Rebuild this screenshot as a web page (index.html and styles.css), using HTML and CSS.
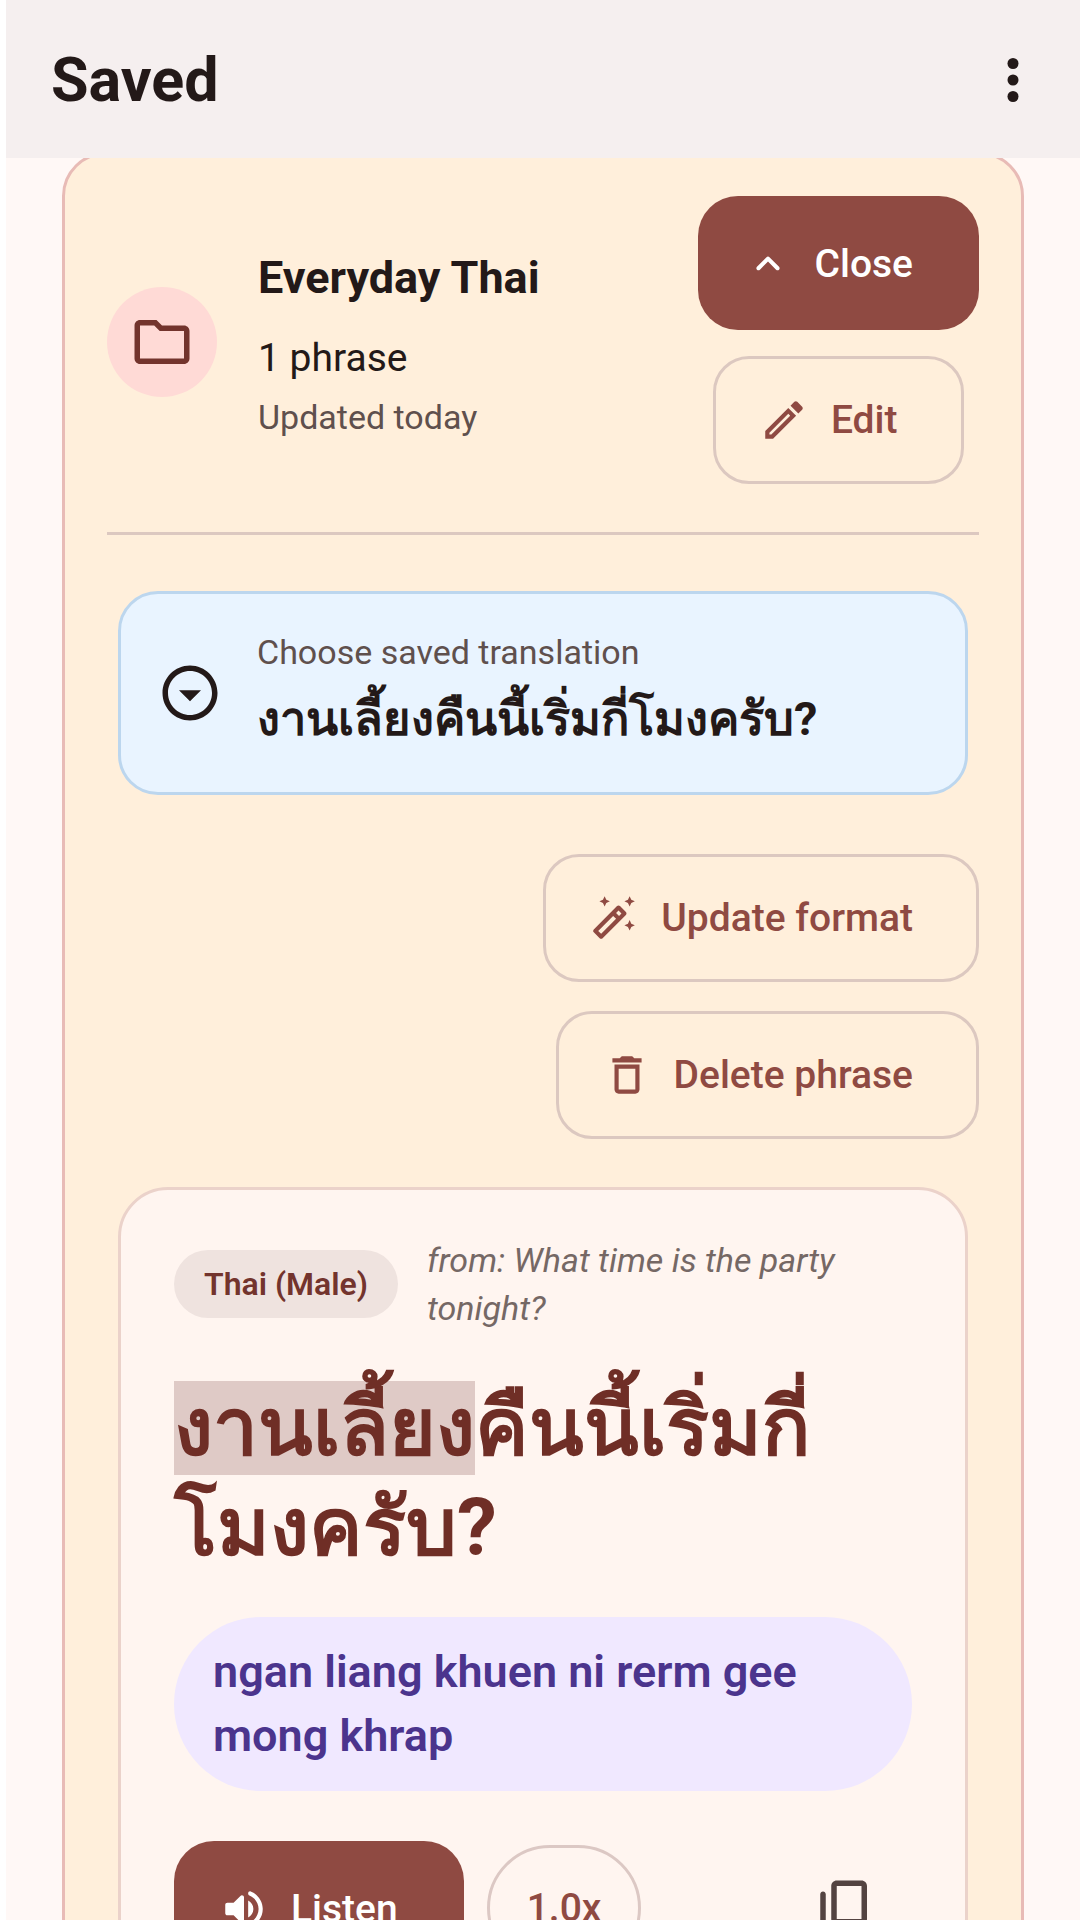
FILE: index.html
```html
<!DOCTYPE html>
<html lang="en">
<head>
    <meta charset="UTF-8">
    <meta name="viewport" content="width=device-width, initial-scale=1.0">

    <title>Saved</title>

    <link rel="stylesheet" href="styles.css">

</head>

<body>

    <header class="app-bar">
        <h1>Saved</h1>
        <button class="icon-button menu-button" aria-label="More options">
            <svg class="icon" viewBox="0 0 24 24"><circle cx="12" cy="6" r="2"/><circle cx="12" cy="12" r="2"/><circle cx="12" cy="18" r="2"/></svg>
        </button>
    </header>

    <main>
        <section class="folder-card">

            <div class="folder-head">
                <div class="folder-avatar">
                    <svg class="icon" viewBox="0 0 24 24"><path d="M9.17 6l2 2H20v10H4V6h5.17M10 4H4c-1.1 0-1.99.9-1.99 2L2 18c0 1.1.9 2 2 2h16c1.1 0 2-.9 2-2V8c0-1.1-.9-2-2-2h-8l-2-2z"/></svg>
                </div>
                <div class="folder-info">
                    <h2>Everyday Thai</h2>
                    <p class="count">1 phrase</p>
                    <p class="caption">Updated today</p>
                </div>
                <div class="folder-actions">
                    <button class="button filled">
                        <svg class="small-icon" viewBox="0 0 24 24"><path d="M8.12 14.71L12 10.83l3.88 3.88c.39.39 1.02.39 1.41 0 .39-.39.39-1.02 0-1.41L12.7 8.71c-.39-.39-1.02-.39-1.41 0L6.7 13.3c-.39.39-.39 1.02 0 1.41.39.38 1.03.39 1.42 0z"/></svg>
                        Close
                    </button>
                    <button class="button outlined">
                        <svg class="small-icon" viewBox="0 0 24 24"><path d="M14.06 9.02l.92.92L5.92 19H5v-.92l9.06-9.06M17.66 3c-.25 0-.51.1-.7.29l-1.83 1.83 3.75 3.75 1.83-1.83c.39-.39.39-1.02 0-1.41l-2.34-2.34c-.2-.2-.45-.29-.71-.29zm-3.6 3.19L3 17.25V21h3.75L17.81 9.94l-3.75-3.75z"/></svg>
                        Edit
                    </button>
                </div>
            </div>

            <hr>

            <div class="picker">
                <svg class="icon" viewBox="0 0 24 24"><path d="M12 4c4.41 0 8 3.59 8 8s-3.59 8-8 8-8-3.59-8-8 3.59-8 8-8m0-2C6.48 2 2 6.48 2 12s4.48 10 10 10 10-4.48 10-10S17.52 2 12 2zm0 13l-4-4h8z"/></svg>
                <div class="picker-field">
                    <label class="caption" for="translation">Choose saved translation</label>
                    <select id="translation" lang="th">
                        <option>งานเลี้ยงคืนนี้เริ่มกี่โมงครับ?</option>
                    </select>
                </div>
            </div>

            <div class="phrase-actions">
                <button class="button outlined">
                    <svg class="small-icon" viewBox="0 0 24 24"><path d="M19.500 6.500l.8-1.700L22 4l-1.700-.8L19.500 1.500l-.8 1.700L17 4l1.700.8zM7.500 6.500l.8-1.700L10 4l-1.700-.8L7.500 1.500l-.8 1.700L5 4l1.700.8zM19.500 13l-.8 1.700-1.700.8 1.700.8.8 1.700.8-1.700 1.700-.8-1.700-.8zm-1.790-3.880l-2.830-2.830c-.2-.19-.45-.29-.71-.29-.26 0-.51.1-.71.29L2.290 17.460c-.39.39-.39 1.020 0 1.410l2.830 2.830c.2.2.45.3.71.3s.51-.1.71-.29l11.170-11.170c.39-.39.39-1.030 0-1.420zm-3.540-.7l1.410 1.410L14.410 11 13 9.590l1.170-1.170zM5.830 19.590l-1.410-1.410L11.590 11 13 12.410l-7.170 7.180z"/></svg>
                    Update format
                </button>
                <button class="button outlined">
                    <svg class="small-icon" viewBox="0 0 24 24"><path d="M6 19c0 1.1.9 2 2 2h8c1.1 0 2-.9 2-2V7H6v12zM8 9h8v10H8V9zm7.5-5l-1-1h-5l-1 1H5v2h14V4z"/></svg>
                    Delete phrase
                </button>
            </div>

            <article class="phrase-card">
                <div class="phrase-source">
                    <span class="chip">Thai (Male)</span>
                    <p class="source-text">from: What time is the party tonight?</p>
                </div>

                <!-- the word being played is marked -->
                <p class="thai" lang="th"><mark>งานเลี้ยง</mark>คืนนี้เริ่มกี่<br>โมงครับ?</p>

                <p class="romanized">ngan liang khuen ni rerm gee mong khrap</p>

                <div class="playback">
                    <button class="button filled">
                        <svg class="small-icon" viewBox="0 0 24 24"><path d="M3 10v4c0 .55.45 1 1 1h3l3.29 3.29c.63.63 1.71.18 1.71-.71V6.41c0-.89-1.08-1.34-1.71-.71L7 9H4c-.55 0-1 .45-1 1zm13.5 2c0-1.77-1.02-3.29-2.5-4.03v8.05c1.48-.73 2.5-2.25 2.5-4.02zM14 4.45v.2c0 .38.25.71.6.85C17.18 6.53 19 9.06 19 12s-1.82 5.47-4.4 6.5c-.36.14-.6.47-.6.85v.2c0 .63.63 1.07 1.21.85C18.6 19.11 21 15.84 21 12s-2.4-7.11-5.79-8.4c-.58-.23-1.21.22-1.21.85z"/></svg>
                        Listen
                    </button>
                    <button class="speed">1.0x</button>
                    <button class="icon-button copy-button" aria-label="Copy">
                        <svg class="icon" viewBox="0 0 24 24"><path d="M15 20H5V7c0-.55-.45-1-1-1s-1 .45-1 1v13c0 1.1.9 2 2 2h10c.55 0 1-.45 1-1s-.45-1-1-1zm5-4V4c0-1.1-.9-2-2-2H9c-1.1 0-2 .9-2 2v12c0 1.1.9 2 2 2h9c1.1 0 2-.9 2-2zm-2 0H9V4h9v12z"/></svg>
                    </button>
                </div>
            </article>

        </section>
    </main>

</body>

</html>
```

FILE: styles.css
```css
* {
    box-sizing: border-box;
}

body {
    margin: 0;
    height: 100vh;
    display: flex;
    flex-direction: column;
    overflow: hidden;
    border-left: 6px solid #ffffff;
    background-color: #fff8f6;
    color: #231918;
    font-family: Roboto, "Noto Sans", sans-serif;
}

h1, h2, p {
    margin: 0;
}

button {
    border: none;
    padding: 0;
    background: none;
    font-family: inherit;
    cursor: pointer;
}

.icon {
    width: 66px;
    height: 66px;
    fill: currentColor;
    flex-shrink: 0;
}

.small-icon {
    width: 50px;
    height: 50px;
    fill: currentColor;
    flex-shrink: 0;
}

.icon-button {
    display: flex;
    align-items: center;
    justify-content: center;
    width: 134px;
    height: 134px;
}

.app-bar {
    display: flex;
    align-items: center;
    justify-content: space-between;
    flex-shrink: 0;
    height: 158px;
    padding: 2px 0 0 45px;
    background-color: #f5efef;
}

h1 {
    font-size: 61px;
    line-height: 76px;
    font-weight: 700;
}

.menu-button {
    color: #231918;
}

main {
    flex: 1;
    min-height: 0;
    overflow-y: auto;
    scrollbar-width: none;
    padding: 0 56px;
}

.folder-card {
    margin-top: -6px;
    padding: 41px 42px;
    border: 3px solid #e8bbb6;
    border-radius: 44px;
    background-color: #ffefdb;
}

.folder-head {
    display: flex;
    align-items: center;
    padding-bottom: 48px;
}

.folder-avatar,
.folder-info {
    margin-top: 4px;
}

.folder-avatar {
    display: flex;
    align-items: center;
    justify-content: center;
    width: 110px;
    height: 110px;
    border-radius: 50%;
    background-color: #ffdad6;
    color: #73342d;
}

.folder-info {
    flex: 1;
    margin-left: 41px;
}

h2 {
    font-size: 45px;
    line-height: 66px;
    font-weight: 700;
    margin-bottom: 20px;
}

.count {
    font-size: 39px;
    line-height: 55px;
    margin-bottom: 8px;
}

.caption {
    font-size: 34px;
    line-height: 46px;
    color: #5f504d;
}

.folder-actions {
    display: flex;
    flex-direction: column;
    align-items: center;
    gap: 26px;
}

.button {
    display: flex;
    align-items: center;
    gap: 22px;
    font-size: 39px;
    line-height: 55px;
    font-weight: 500;
}

.filled {
    height: 134px;
    padding: 2px 66px 0 45px;
    border-radius: 40px;
    background-color: #8f4a42;
    color: #ffffff;
}

.outlined {
    height: 128px;
    padding: 0 63px 0 43px;
    border: 3px solid #dcc8c0;
    border-radius: 36px;
    color: #8f4a42;
}

hr {
    margin: 0 0 56px;
    border: none;
    border-top: 3px solid #dcc8c0;
}

.picker {
    display: flex;
    align-items: center;
    gap: 34px;
    height: 204px;
    margin: 0 11px;
    padding: 0 36px;
    border: 3px solid #bcd6ee;
    border-radius: 40px;
    background-color: #e9f4ff;
}

.picker-field {
    flex: 1;
    display: flex;
    flex-direction: column;
    padding-top: 6px;
}

select {
    appearance: none;
    height: 88px;
    padding: 0;
    border: none;
    background: none;
    color: #231918;
    font-family: inherit;
    font-size: 47px;
    line-height: 84px;
    font-weight: 700;
}

.phrase-actions {
    display: flex;
    flex-direction: column;
    align-items: flex-end;
    gap: 29px;
    margin-top: 59px;
}

.phrase-card {
    margin: 48px 11px 0;
    padding: 46px 53px;
    border: 3px solid #ebd2ca;
    border-radius: 50px;
    background-color: #fff5f0;
}

.phrase-source {
    display: flex;
    align-items: center;
    gap: 29px;
}

.chip {
    flex-shrink: 0;
    padding: 12px 30px;
    border-radius: 34px;
    background-color: #efe3df;
    color: #73342d;
    font-size: 32px;
    line-height: 44px;
    font-weight: 600;
}

.source-text {
    font-size: 34px;
    line-height: 48px;
    font-style: italic;
    color: #756865;
}

.thai {
    margin-top: 46px;
    font-size: 80px;
    line-height: 100px;
    font-weight: 700;
    color: #6f2e26;
}

mark {
    background-color: #dfcac6;
    color: inherit;
}

.romanized {
    margin-top: 39px;
    padding: 23px 39px;
    border-radius: 88px;
    background-color: #f0e8ff;
    color: #4b348d;
    font-size: 45px;
    line-height: 64px;
    font-weight: 600;
}

.playback {
    display: flex;
    align-items: center;
    gap: 23px;
    margin-top: 50px;
}

.speed {
    height: 126px;
    padding: 0 37px;
    border: 3px solid #dcc8c4;
    border-radius: 63px;
    color: #8f4a42;
    font-size: 39px;
    font-weight: 500;
}

.copy-button {
    margin-left: auto;
    color: #534341;
}
```
